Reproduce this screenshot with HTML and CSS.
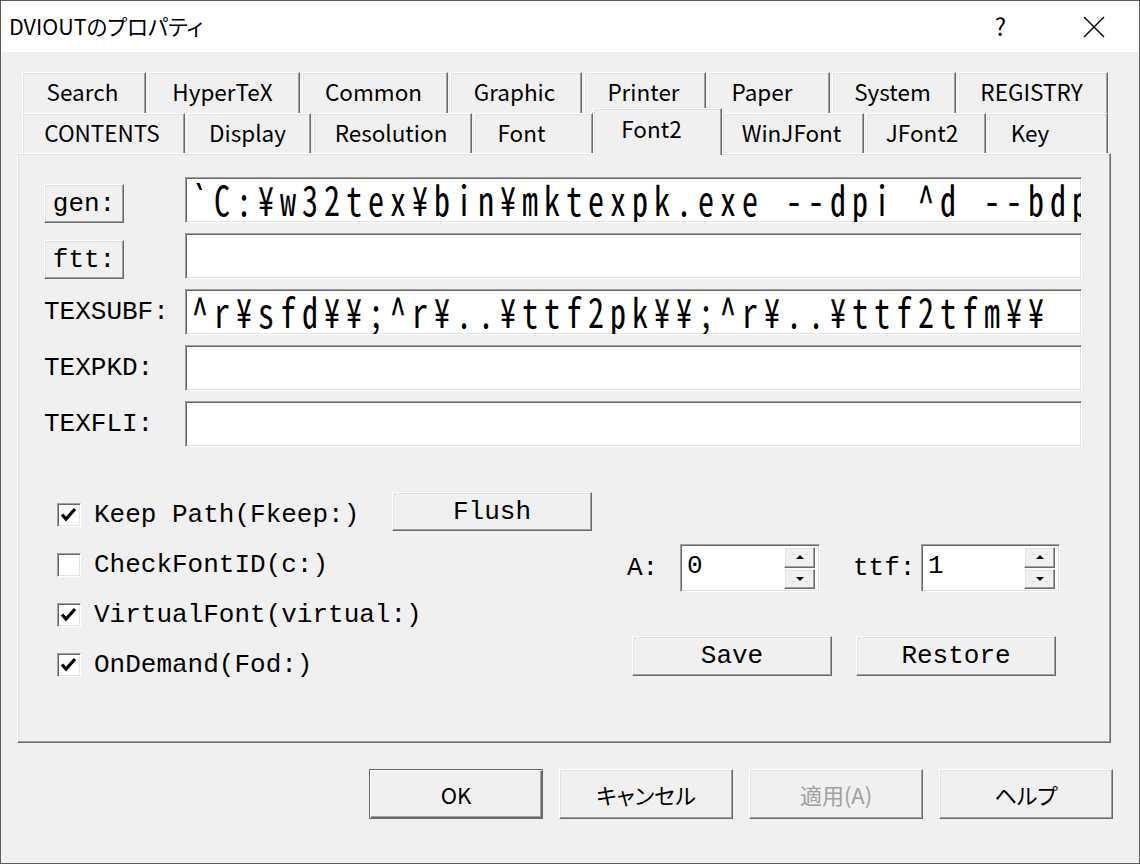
FILE: index.html
```html
<!DOCTYPE html>
<html lang="ja">
<head>
<meta charset="utf-8">
<title>DVIOUTのプロパティ</title>
<link rel="stylesheet" href="styles.css">
</head>
<body>
<div class="window">
  <div class="titlebar">
    <div class="title">DVIOUTのプロパティ</div>
    <div class="cap-btn help">?</div>
    <div class="cap-btn close"><svg width="22" height="22" viewBox="0 0 22 22"><path d="M1 1L21 21M21 1L1 21" stroke="#000" stroke-width="1.4" fill="none"/></svg></div>
  </div>
  <div class="client">
    <div class="tabs">
      <div class="tabrow row1">
        <div class="tab">Search</div>
        <div class="tab">HyperTeX</div>
        <div class="tab">Common</div>
        <div class="tab">Graphic</div>
        <div class="tab">Printer</div>
        <div class="tab t-paper">Paper</div>
        <div class="tab">System</div>
        <div class="tab">REGISTRY</div>
      </div>
      <div class="tabrow row2">
        <div class="tab">CONTENTS</div>
        <div class="tab">Display</div>
        <div class="tab">Resolution</div>
        <div class="tab t-font">Font</div>
        <div class="tab sel">Font2</div>
        <div class="tab">WinJFont</div>
        <div class="tab t-jfont2">JFont2</div>
        <div class="tab t-key">Key</div>
      </div>
    </div>
    <div class="panel">
      <div class="fields">
        <div class="frow btnrow"><div class="fhead"><button class="btn3d mono small">gen:</button></div><div class="edit"><span>`C:¥w32tex¥bin¥mktexpk.exe --dpi ^d --bdpi ^b --mag ^M --mfmode ^D ^n</span></div></div>
        <div class="frow btnrow"><div class="fhead"><button class="btn3d mono small">ftt:</button></div><div class="edit"></div></div>
        <div class="frow"><div class="fhead mono">TEXSUBF:</div><div class="edit"><span>^r¥sfd¥¥;^r¥..¥ttf2pk¥¥;^r¥..¥ttf2tfm¥¥</span></div></div>
        <div class="frow"><div class="fhead mono">TEXPKD:</div><div class="edit"></div></div>
        <div class="frow"><div class="fhead mono">TEXFLI:</div><div class="edit"></div></div>
      </div>
      <div class="lower">
        <div class="checks">
          <div class="chkrow">
            <div class="chk"><svg width="22" height="22" viewBox="0 0 22 22"><path d="M4 10.5l4 4.5 9-10" stroke="#000" stroke-width="3.2" fill="none"/></svg></div>
            <span class="chklbl mono">Keep Path(Fkeep:)</span>
            <button class="btn3d mono flush">Flush</button>
          </div>
          <div class="chkrow">
            <div class="chk"></div>
            <span class="chklbl mono">CheckFontID(c:)</span>
          </div>
          <div class="chkrow">
            <div class="chk"><svg width="22" height="22" viewBox="0 0 22 22"><path d="M4 10.5l4 4.5 9-10" stroke="#000" stroke-width="3.2" fill="none"/></svg></div>
            <span class="chklbl mono">VirtualFont(virtual:)</span>
          </div>
          <div class="chkrow">
            <div class="chk"><svg width="22" height="22" viewBox="0 0 22 22"><path d="M4 10.5l4 4.5 9-10" stroke="#000" stroke-width="3.2" fill="none"/></svg></div>
            <span class="chklbl mono">OnDemand(Fod:)</span>
          </div>
        </div>
        <div class="right">
          <div class="spins">
            <span class="mono lbl-a">A:</span>
            <div class="spin">
              <div class="spin-val mono">0</div>
              <div class="arrows"><div class="arr btn3d"><i class="up"></i></div><div class="arr btn3d"><i class="down"></i></div></div>
            </div>
            <span class="mono lbl-ttf">ttf:</span>
            <div class="spin spin2">
              <div class="spin-val mono">1</div>
              <div class="arrows"><div class="arr btn3d"><i class="up"></i></div><div class="arr btn3d"><i class="down"></i></div></div>
            </div>
          </div>
          <div class="saverow">
            <button class="btn3d mono wide">Save</button>
            <button class="btn3d mono wide">Restore</button>
          </div>
        </div>
      </div>
    </div>
    <div class="footer">
      <button class="btn3d fbtn default">OK</button>
      <button class="btn3d fbtn">キャンセル</button>
      <button class="btn3d fbtn disabled">適用(A)</button>
      <button class="btn3d fbtn">ヘルプ</button>
    </div>
  </div>
</div>
</body>
</html>
```

FILE: styles.css
```css
* { box-sizing: border-box; }
html, body { margin: 0; padding: 0; }
body {
  width: 1140px;
  height: 864px;
  background: #f0f0f0;
  font-family: "Noto Sans CJK JP", "Noto Sans", sans-serif;
  font-feature-settings: "palt";
  color: #000;
}
.window {
  width: 1140px;
  height: 864px;
  border: 1px solid #5b5b5b;
  background: #f0f0f0;
  display: flex;
  flex-direction: column;
}
.titlebar {
  height: 51px;
  background: #fff;
  display: flex;
  align-items: center;
  flex: none;
}
.title {
  flex: 1;
  padding-left: 8px;
  font-size: 21.5px;
  padding-bottom: 2px;
}
.cap-btn {
  width: 91px;
  height: 51px;
  display: flex;
  align-items: center;
  justify-content: center;
}
.help { font-size: 24px; padding-bottom: 3px; padding-right: 4px; }
.close svg { display: block; }
.client { padding: 20px 28px 0 16px; }

/* tabs */
.tabs { margin-left: 5px; width: 1086px; }
.tabrow { display: grid; column-gap: 2px; }
.row1 { grid-template-columns: 124px 152px 146px 132px 122px 122px 124px 150px; height: 41px; }
.row2 { grid-template-columns: 163px 124px 159px 119px 125px 142px 120px 120px; height: 40px; }
.tab {
  background: #f0f0f0;
  border-top: 1px solid #fff;
  border-left: 1px solid #fff;
  border-right: 1px solid #696969;
  box-shadow: inset -1px 0 #a0a0a0, inset 1px 1px #e3e3e3;
  display: flex;
  align-items: center;
  justify-content: center;
  font-size: 22.5px;
  line-height: 1;
  padding-right: 3px;
  padding-bottom: 3px;
}
.tab.t-paper { padding-right: 14px; }
.tab.t-font { padding-right: 24px; }
.tab.t-jfont2 { padding-right: 8px; }
.tab.t-key { padding-right: 36px; }
.tab.sel {
  margin: -5px -2px -2px;
  position: relative;
  z-index: 1;
  padding-bottom: 8px;
  padding-right: 12px;
}

/* panel */
.panel {
  width: 1094px;
  height: 590px;
  border: 1px solid;
  border-color: #fff #696969 #696969 #fff;
  box-shadow: inset -1px -1px #a0a0a0, inset 1px 1px #e3e3e3;
  padding: 23px 0 0 26px;
}
.mono {
  font-family: "Liberation Mono", "DejaVu Sans Mono", monospace;
  font-size: 26px;
  font-feature-settings: normal;
}
.btn3d {
  background: #f0f0f0;
  border: 1px solid;
  border-color: #fff #696969 #696969 #fff;
  box-shadow: inset -1px -1px #a0a0a0, inset 1px 1px #e3e3e3;
  padding: 0;
  margin: 0;
  color: #000;
  appearance: none;
}
.fields { display: flex; flex-direction: column; gap: 10px; }
.frow { display: flex; align-items: center; height: 46px; }
.frow.btnrow { align-items: flex-end; }
.fhead { width: 141px; flex: none; }
.small { width: 80px; height: 39px; display: block; line-height: 1; }
.edit {
  width: 897px;
  height: 46px;
  flex: none;
  background: #fff;
  border: 1px solid;
  border-color: #a0a0a0 #fff #fff #a0a0a0;
  box-shadow: inset 1px 1px #696969, inset -1px -1px #e3e3e3;
  font-family: "Noto Sans Mono CJK JP", "Noto Sans Mono CJK SC", "DejaVu Sans Mono", monospace;
  font-feature-settings: normal;
  font-weight: 300;
  font-size: 32px;
  letter-spacing: 6px;
  padding-left: 6px;
  padding-bottom: 4px;
  white-space: pre;
  overflow: hidden;
  display: flex;
  align-items: center;
}
.edit span {
  display: block;
  line-height: 30px;
  transform: scaleY(1.28);
  transform-origin: 50% 50%;
}

/* lower part */
.lower { display: flex; margin-top: 43px; padding-left: 13px; }
.checks { width: 570px; flex: none; }
.chkrow { height: 50px; display: flex; align-items: center; }
.chk {
  width: 24px;
  height: 24px;
  flex: none;
  background: #fff;
  border: 1px solid;
  border-color: #a0a0a0 #fff #fff #a0a0a0;
  box-shadow: inset 1px 1px #696969, inset -1px -1px #e3e3e3;
  margin-right: 13px;
}
.chk svg { display: block; margin: 0; }
.chklbl { width: 298px; flex: none; white-space: pre; }
.flush { align-self: flex-start; margin-top: 2px; width: 200px; height: 39px; line-height: 1; }

.right { margin-top: 54px; }
.spins { display: flex; align-items: center; height: 48px; }
.lbl-a { width: 53px; }
.lbl-ttf { margin-left: 33px; width: 68px; }
.spin {
  width: 140px;
  height: 48px;
  display: flex;
  background: #fff;
  border: 1px solid;
  border-color: #a0a0a0 #fff #fff #a0a0a0;
  box-shadow: inset 1px 1px #696969, inset -1px -1px #e3e3e3;
  padding: 2px 4px 2px 1px;
}
.spin2 { width: 139px; }
.spin-val { flex: 1; padding-left: 5px; line-height: 38px; }
.arrows { width: 31px; display: flex; flex-direction: column; gap: 1px; }
.arr { flex: 1; display: flex; align-items: center; justify-content: center; }
.arr i { display: block; width: 0; height: 0; border-left: 4px solid transparent; border-right: 4px solid transparent; }
.arr .up { border-bottom: 4px solid #000; }
.arr .down { border-top: 4px solid #000; }
.saverow { display: flex; margin-top: 44px; padding-left: 5px; gap: 24px; }
.wide { width: 200px; height: 40px; line-height: 1; }

/* footer */
.footer {
  display: flex;
  justify-content: flex-end;
  gap: 16px;
  margin-top: 26px;
  margin-right: -2px;
}
.fbtn {
  width: 174px;
  height: 50px;
  font-family: "Noto Sans CJK JP", "Noto Sans", sans-serif;
  font-feature-settings: "palt";
  font-size: 22px;
  line-height: 1;
}
.fbtn.default {
  border-color: #696969;
  box-shadow: inset 1px 1px #fff, inset -1px -1px #696969, inset -2px -2px #a0a0a0;
}
.fbtn.disabled { color: #a0a0a0; }
```
